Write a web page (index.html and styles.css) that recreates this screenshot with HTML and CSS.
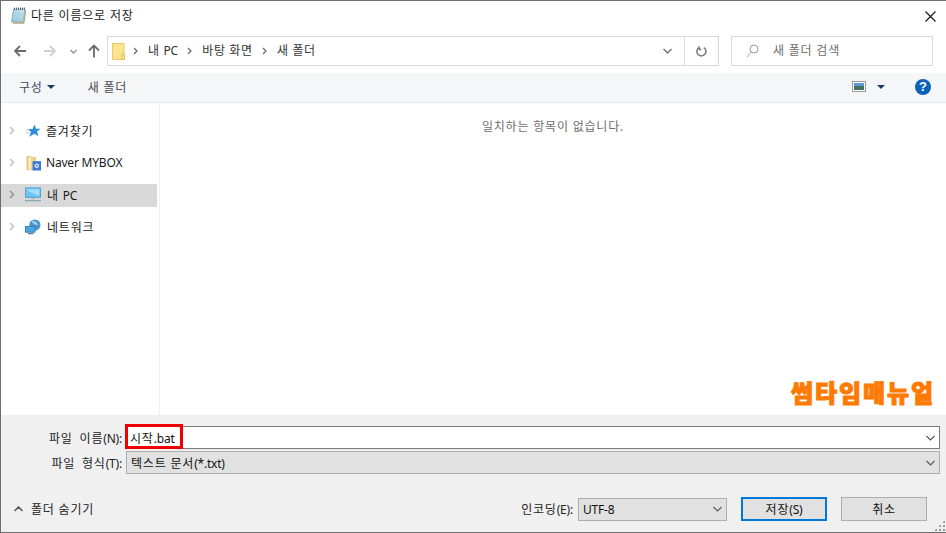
FILE: index.html
```html
<!DOCTYPE html>
<html lang="ko">
<head>
<meta charset="utf-8">
<title>다른 이름으로 저장</title>
<link rel="stylesheet" href="styles.css">
</head>
<body>
<div class="window">
  <header class="titlebar">
    <svg class="title-icon" width="16" height="17" viewBox="0 0 16 17"><defs><linearGradient id="pg" x1="0" y1="1" x2="1" y2="0"><stop offset="0" stop-color="#8fc6dc"/><stop offset="1" stop-color="#cfe9f4"/></linearGradient></defs><path d="M3.500 2H15l-2 13H1.500z" fill="url(#pg)" stroke="#83a3b3" stroke-width=".8"/><path d="M3 16h10.800l2-13" fill="none" stroke="#b3a67c" stroke-width="1.300"/><path d="M4.500.5v2.500M6.500.5v2.500M8.500.5v2.500M10.500.5v2.500M12.500.5v2.500M14.500.5v2.500" stroke="#4d5c63" stroke-width=".9"/><path d="M4 6h8.500M3.700 8h8.500M3.400 10h8.500M3.100 12h8.500" stroke="#a9d3e5" stroke-width=".8"/></svg>
    <span class="title-text">다른 이름으로 저장</span>
    <svg class="close" width="11" height="11" viewBox="0 0 11 11"><path d="M.5.500l10 10M10.500.500l-10 10" stroke="#111" stroke-width="1.100"/></svg>
  </header>

  <nav class="navbar">
    <div class="nav-buttons">
      <svg class="nav-back" width="12" height="12" viewBox="0 0 12 12"><path d="M12 6H1.500M6 1 1 6l5 5" fill="none" stroke="#6b6b6b" stroke-width="1.800"/></svg>
      <svg class="nav-forward" width="12" height="12" viewBox="0 0 12 12"><path d="M0 6h10.500M6 1l5 5-5 5" fill="none" stroke="#cfcfcf" stroke-width="1.800"/></svg>
      <svg class="nav-recent" width="7" height="5" viewBox="0 0 7 5"><path d="M.500 1 3.500 4l3-3" fill="none" stroke="#8d8d8d" stroke-width="1.300"/></svg>
      <svg width="12" height="14" viewBox="0 0 12 14"><path d="M6 13.500V2M1 6.500l5-5 5 5" fill="none" stroke="#6b6b6b" stroke-width="1.800"/></svg>
    </div>
    <div class="address">
      <div class="crumbs">
        <svg class="folder" width="13" height="17" viewBox="0 0 13 17"><path d="M.5.500h11.500v16H.5z" fill="#fbe38f" stroke="#e8c860"/><path d="M10 11h2.500v5.500H10z" fill="#fbe38f" stroke="#e3bd4e"/></svg>
        <svg class="crumb-sep first" width="5" height="8" viewBox="0 0 5 8"><path d="M1 1l3 3-3 3" fill="none" stroke="#6d6d6d" stroke-width="1.300"/></svg>
        <span>내 <span class="lat">PC</span></span>
        <svg class="crumb-sep" width="5" height="8" viewBox="0 0 5 8"><path d="M1 1l3 3-3 3" fill="none" stroke="#6d6d6d" stroke-width="1.300"/></svg>
        <span>바탕 화면</span>
        <svg class="crumb-sep" width="5" height="8" viewBox="0 0 5 8"><path d="M1 1l3 3-3 3" fill="none" stroke="#6d6d6d" stroke-width="1.300"/></svg>
        <span>새 폴더</span>
      </div>
      <div class="addr-drop"><svg width="9" height="6" viewBox="0 0 9 6"><path d="M.500 1 4.500 5l4-4" fill="none" stroke="#777" stroke-width="1.500"/></svg></div>
      <div class="addr-refresh"><svg width="11" height="12" viewBox="0 0 11 12"><path d="M7.800 2.600A4.500 4.500 0 1 1 3 2.600" fill="none" stroke="#777" stroke-width="1.500"/><path d="M2.500 0v5h3z" fill="#777" transform="translate(0 .3)"/></svg></div>
    </div>
    <div class="search">
      <svg width="13" height="14" viewBox="0 0 13 14"><circle cx="8" cy="5" r="4" fill="none" stroke="#9a9a9a"/><path d="M5 8 1 13" stroke="#c4a2a2"/></svg>
      <span>새 폴더 검색</span>
    </div>
  </nav>

  <div class="toolbar">
    <span class="tool-item">구성<i class="caret"></i></span>
    <span class="tool-item new-folder">새 폴더</span>
    <div class="tool-right">
      <svg class="view-icon" width="14" height="11" viewBox="0 0 14 11"><rect x=".5" y=".5" width="13" height="10" fill="#fff" stroke="#9a9a9a"/><rect x="2" y="2" width="10" height="3" fill="#5b9bd5"/><rect x="2" y="5" width="10" height="4" fill="#47705f"/></svg>
      <i class="caret view-caret"></i>
      <span class="help">?</span>
    </div>
  </div>

  <main class="content">
    <aside class="sidebar">
      <div class="tree-row">
        <svg class="chev" width="6" height="9" viewBox="0 0 6 9"><path d="M1 1l3.500 3.500L1 8" fill="none" stroke="#bdbdbd" stroke-width="1.400"/></svg>
        <svg class="tree-icon" width="15" height="14" viewBox="0 0 16 14"><path d="M9 0l1.800 4.500H15.500l-3.700 3 1.400 5L9 9.800 3.500 13l1.700-5.200L2 4.800h5z" fill="#2f8ed6"/><path d="M0 6h4M0 9h3" stroke="#a9cbe4"/></svg>
        <span>즐겨찾기</span>
      </div>
      <div class="tree-row">
        <svg class="chev" width="6" height="9" viewBox="0 0 6 9"><path d="M1 1l3.500 3.500L1 8" fill="none" stroke="#bdbdbd" stroke-width="1.400"/></svg>
        <svg class="tree-icon" width="15" height="16" viewBox="0 0 16 16"><path d="M1 1h4l1 1h4v13H1z" fill="#f0d78c" stroke="#c9b06a" stroke-width=".7"/><path d="M3 2h2v13H3z" fill="#fff4c8"/><rect x="7" y="6" width="9" height="10" fill="#3b78d8"/><circle cx="11.500" cy="11" r="2.500" fill="#cfe0fa"/><circle cx="11.500" cy="11" r="1" fill="#3b78d8"/></svg>
        <span class="lat">Naver MYBOX</span>
      </div>
      <div class="tree-row selected">
        <svg class="chev" width="6" height="9" viewBox="0 0 6 9"><path d="M1 1l3.500 3.500L1 8" fill="none" stroke="#8a8a8a" stroke-width="1.400"/></svg>
        <svg class="tree-icon pc" width="16" height="15" viewBox="0 0 17 15"><rect x=".5" y=".5" width="16" height="10" fill="#6fc4f2" stroke="#4f9fd1"/><path d="M2 2h13v7L2 3z" fill="#a5defa"/><path d="M7 11h3v1H7z" fill="#8aa9bd"/><path d="M0 14h17" stroke="#8aa9bd" stroke-width="1.500"/></svg>
        <span>내 <span class="lat">PC</span></span>
      </div>
      <div class="tree-row">
        <svg class="chev" width="6" height="9" viewBox="0 0 6 9"><path d="M1 1l3.500 3.500L1 8" fill="none" stroke="#bdbdbd" stroke-width="1.400"/></svg>
        <svg class="tree-icon pc" width="16" height="16" viewBox="0 0 17 16"><circle cx="10.500" cy="6" r="6" fill="#4f94c8"/><path d="M7 2c3-1 6 1 7 4-3 0-6-1-7-4z" fill="#9fd0ee"/><rect x=".5" y="7.500" width="10" height="6" fill="#4aa7e0" stroke="#2d7fb3"/><path d="M3 15h6" stroke="#5b7f97" stroke-width="1.400"/></svg>
        <span>네트워크</span>
      </div>
    </aside>
    <section class="files">
      <p class="empty">일치하는 항목이 없습니다.</p>
      <div class="watermark">썸타임매뉴얼</div>
    </section>
  </main>

  <footer class="footer">
    <div class="field-row name-row">
      <label class="field-label">파일 이름<span class="lat">(N):</span></label>
      <div class="combo name-combo">
        <span class="name-value">시작<span class="lat">.bat</span></span>
        <i class="highlight"></i>
        <svg width="9" height="6" viewBox="0 0 9 6"><path d="M.500 1 4.500 5l4-4" fill="none" stroke="#555" stroke-width="1.100"/></svg>
      </div>
    </div>
    <div class="field-row type-row">
      <label class="field-label">파일 형식<span class="lat">(T):</span></label>
      <div class="combo type-combo">
        <span class="type-value">텍스트 문서<span class="lat">(*.txt)</span></span>
        <svg width="9" height="6" viewBox="0 0 9 6"><path d="M.500 1 4.500 5l4-4" fill="none" stroke="#555" stroke-width="1.100"/></svg>
      </div>
    </div>
    <div class="actions">
      <span class="hide-folders">
        <svg width="9" height="6" viewBox="0 0 9 6"><path d="M.500 5 4.500 1l4 4" fill="none" stroke="#555" stroke-width="1.500"/></svg>
        <span>폴더 숨기기</span>
      </span>
      <label class="enc-label">인코딩<span class="lat">(E):</span></label>
      <div class="combo enc-combo">
        <span class="lat">UTF-8</span>
        <svg width="9" height="6" viewBox="0 0 9 6"><path d="M.500 1 4.500 5l4-4" fill="none" stroke="#555" stroke-width="1.100"/></svg>
      </div>
      <button class="btn primary">저장<span class="lat">(S)</span></button>
      <button class="btn">취소</button>
    </div>
    <i class="grip"></i>
  </footer>
</div>
</body>
</html>
```

FILE: styles.css
```css
* { box-sizing: border-box; }
html, body { margin: 0; padding: 0; }
body {
  width: 946px;
  height: 533px;
  overflow: hidden;
  background: #fff;
  font-family: "Noto Sans", "Noto Sans CJK KR", sans-serif;
  font-size: 12px;
  letter-spacing: 0.800px;
  color: #1a1a1a;
}
.lat { letter-spacing: -0.200px; }
.window {
  width: 946px;
  height: 533px;
  border: 1px solid #6e6e6e;
  border-right: 0;
  display: flex;
  flex-direction: column;
  background: #fff;
}
.titlebar {
  height: 28px;
  flex: none;
  display: flex;
  align-items: center;
  padding: 0 10px 0 9px;
}
.title-text { margin-left: 5px; }
.close { margin-left: auto; margin-top: 2px; }
.navbar {
  height: 44px;
  flex: none;
  display: flex;
  align-items: flex-start;
  padding: 7px 12px 0 13px;
}
.nav-buttons {
  width: 93px;
  height: 30px;
  display: flex;
  align-items: center;
}
.nav-back { margin-right: 18px; }
.nav-forward { margin-right: 14px; }
.nav-recent { margin-right: 11px; }
.address {
  width: 612px;
  height: 30px;
  border: 1px solid #d9d9d9;
  display: flex;
  align-items: stretch;
}
.crumbs {
  flex: 1;
  display: flex;
  align-items: center;
  padding-left: 4px;
  color: #333;
  letter-spacing: 0.600px;
}
.crumbs span { margin-top: -2px; }
.crumbs span span { margin-top: 0; }
.folder { margin-right: 8px; }
.crumb-sep { margin: 0 10.500px 0 9px; }
.crumb-sep.first { margin-left: 0; margin-right: 10px; }
.addr-drop {
  width: 34px;
  display: flex;
  align-items: center;
  justify-content: center;
  border-right: 1px solid #d9d9d9;
}
.addr-refresh {
  width: 33px;
  display: flex;
  align-items: center;
  justify-content: center;
}
.search {
  width: 202px;
  height: 30px;
  margin-left: 12px;
  border: 1px solid #d9d9d9;
  display: flex;
  align-items: center;
  gap: 14px;
  padding-left: 14px;
  color: #6d6d6d;
}
.search span { margin-top: -2px; }
.toolbar {
  height: 30px;
  flex: none;
  background: #f5f6f7;
  border-bottom: 1px solid #e9e9e9;
  display: flex;
  align-items: center;
  padding: 0 15px 2px 18px;
  color: #3b4a63;
}
.tool-item { display: flex; align-items: center; }
.new-folder { margin-left: 33px; color: #4a4a55; }
.caret {
  width: 0;
  height: 0;
  margin-left: 4px;
  border-left: 4px solid transparent;
  border-right: 4px solid transparent;
  border-top: 4px solid #1f3864;
}
.tool-right { margin-left: auto; display: flex; align-items: center; }
.view-caret { margin-left: 11px; }
.help {
  width: 16px;
  height: 16px;
  margin-left: 30px;
  border-radius: 50%;
  background: #0a63b8;
  color: #fff;
  font: bold 13px/16px "Liberation Sans", sans-serif;
  letter-spacing: 0;
  text-align: center;
}
.content {
  flex: 1;
  min-height: 0;
  display: flex;
}
.sidebar {
  width: 159px;
  flex: none;
  border-right: 1px solid #f0f0f0;
  padding-top: 17px;
}
.tree-row {
  width: 156px;
  height: 23px;
  margin-bottom: 9px;
  display: flex;
  align-items: center;
  padding: 0 0 2px 8px;
  color: #1a1a1a;
}
.tree-row.selected { background: #d9d9d9; }
.chev { margin-right: 11px; }
.tree-icon { margin-right: 5px; flex: none; }
.tree-icon.pc { margin-left: -1px; margin-right: 6px; }
.files {
  flex: 1;
  display: flex;
  flex-direction: column;
  padding: 14px 0 9px 0;
}
.empty {
  margin: 0;
  text-align: center;
  color: #6d6d6d;
}
.watermark {
  margin-top: auto;
  padding-right: 11px;
  text-align: right;
  font-family: "Noto Sans CJK KR", sans-serif;
  font-size: 24px;
  font-weight: 900;
  line-height: 28px;
  letter-spacing: 1.900px;
  -webkit-text-stroke: 1px #ff7a00;
  color: #ff7a00;
}
.footer {
  height: 117px;
  flex: none;
  position: relative;
  background: #f0f0f0;
  padding: 11px 6px 0 0;
}
.field-row {
  height: 23px;
  display: flex;
  align-items: center;
  margin-bottom: 2px;
}
.field-label {
  width: 125px;
  padding-right: 4px;
  text-align: right;
  word-spacing: 3px;
  color: #222;
}
.combo {
  position: relative;
  display: flex;
  align-items: center;
  justify-content: space-between;
  padding: 0 4px 0 3px;
  height: 100%;
  border: 1px solid #7a7a7a;
  background: #fff;
  color: #111;
}
.name-combo, .type-combo { flex: 1; }
.highlight {
  position: absolute;
  left: -2px;
  top: -3px;
  width: 58px;
  height: 25px;
  border: 3px solid #f00000;
}
.type-combo { background: #e1e1e1; border-color: #adadad; }
.type-value { margin-left: 1px; }
.actions {
  height: 24px;
  margin-top: 23px;
  display: flex;
  align-items: center;
  padding-right: 13px;
}
.hide-folders {
  display: flex;
  align-items: center;
  gap: 8px;
  margin-left: 13px;
  margin-right: auto;
  color: #222;
}
.enc-label { margin-right: 5px; color: #222; }
.enc-combo {
  width: 149px;
  height: 23px;
  margin-right: 14px;
  background: #e1e1e1;
  border-color: #adadad;
  padding-left: 4px;
}
.btn {
  width: 86px;
  height: 24px;
  margin-left: 14px;
  padding: 0 0 1px;
  border: 1px solid #adadad;
  background: #e1e1e1;
  font: inherit;
  letter-spacing: inherit;
  color: #111;
}
.enc-combo + .btn { margin-left: 0; }
.btn.primary { border: 2px solid #0078d7; }
.grip {
  position: absolute;
  right: 1px;
  bottom: 1px;
  width: 11px;
  height: 11px;
  background: radial-gradient(circle, #9a9a9a 0 1px, transparent 1px) 0 0 / 4px 4px;
  clip-path: polygon(100% 0, 100% 100%, 0 100%);
}
```
